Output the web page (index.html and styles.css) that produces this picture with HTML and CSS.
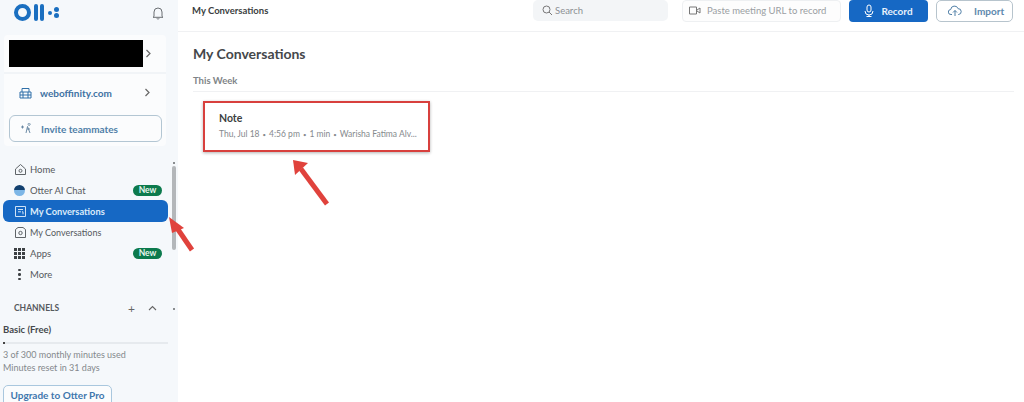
FILE: index.html
```html
<!DOCTYPE html>
<html lang="en">
<head>
<meta charset="utf-8">
<title>My Conversations</title>
<link rel="stylesheet" href="styles.css">
</head>
<body>
<div class="app">
  <aside class="sidebar">
    <div class="brand">
      <div class="logo"><span class="logo-o"></span><span class="logo-l"></span><span class="logo-l"></span><span class="logo-dot"></span><span class="logo-s"><i></i><i></i></span></div>
      <svg class="bell" width="14" height="14" viewBox="0 0 14 14"><path d="M3 10.500V6a4 4 0 0 1 8 0v4.500l1 .8H2zM5.800 12.300a1.300 1.300 0 0 0 2.400 0" fill="none" stroke="#6b6f73" stroke-width="1"/></svg>
    </div>
    <div class="account-card">
      <div class="account-row"><div class="redacted"></div><svg class="chev" width="7" height="9" viewBox="0 0 7 9"><path d="M1.500 1l3.500 3.500L1.500 8" fill="none" stroke="#666" stroke-width="1.200"/></svg></div>
      <div class="org-row">
        <svg width="13" height="13" viewBox="0 0 13 13"><path d="M1 6h11v6H1zM3 6V2.500h7V6M1 9h11M4 6v6M9 6v6" fill="none" stroke="#2f6fa8" stroke-width="1"/></svg>
        <span class="org-name">weboffinity.com</span>
        <svg class="chev-org" width="7" height="9" viewBox="0 0 7 9"><path d="M1.500 1l3.500 3.500L1.500 8" fill="none" stroke="#666" stroke-width="1.200"/></svg>
      </div>
      <button class="invite"><svg width="11" height="11" viewBox="0 0 11 11"><path d="M0 4h3M1.500 2.500v3M7 1.200a1.100 1.100 0 1 1 0 .1M6.500 3.500L5 10M6.500 3.500L9 10M6 6h3" fill="none" stroke="#5d7f9c" stroke-width=".9"/></svg><span>Invite teammates</span></button>
    </div>
    <nav class="nav">
      <div class="nav-item"><svg class="nav-icon" width="13" height="13" viewBox="0 0 13 13"><path d="M1.500 6L6.500 1.500 11.500 6v5.500h-10z" fill="none" stroke="#5f6468" stroke-width="1"/><circle cx="6.500" cy="7.800" r="1.500" fill="none" stroke="#5f6468"/></svg><span>Home</span></div>
      <div class="nav-item"><span class="chat-icon"></span><span>Otter AI Chat</span><span class="badge">New</span></div>
      <div class="nav-item active"><svg class="nav-icon" width="13" height="13" viewBox="0 0 13 13"><path d="M1.500 1.500h10v10h-10zM4 4.500h5M4 6.800h3M8 6.800h1v2.500" fill="none" stroke="#cfe2f6" stroke-width="1"/></svg><span>My Conversations</span></div>
      <div class="nav-item"><svg class="nav-icon" width="13" height="13" viewBox="0 0 13 13"><path d="M1.500 3.500L4 1.500h5l2.500 2v8h-10z" fill="none" stroke="#5f6468" stroke-width="1"/><circle cx="6.500" cy="7" r="1.700" fill="none" stroke="#5f6468"/></svg><span class="tight">My Conversations</span></div>
      <div class="nav-item"><span class="apps-icon"><i></i><i></i><i></i><i></i><i></i><i></i><i></i><i></i><i></i></span><span>Apps</span><span class="badge">New</span></div>
      <div class="nav-item"><span class="more-icon"><i></i><i></i><i></i></span><span>More</span></div>
    </nav>
    <div class="channels">
      <span class="channels-title">CHANNELS</span>
      <span class="channel-plus">+</span>
      <svg width="9" height="6" viewBox="0 0 9 6"><path d="M1 5l3.500-3.500L8 5" fill="none" stroke="#666" stroke-width="1.100"/></svg>
    </div>
    <div class="plan">
      <div class="plan-name">Basic (Free)</div>
      <div class="plan-bar"><div class="plan-fill"></div></div>
      <div class="plan-text">3 of 300 monthly minutes used</div>
      <div class="plan-text">Minutes reset in 31 days</div>
      <button class="upgrade">Upgrade to Otter Pro</button>
    </div>
    <div class="scrollbar"></div>
  </aside>
  <main class="main">
    <header class="topbar">
      <div class="top-title">My Conversations</div>
      <div class="search"><svg width="11" height="11" viewBox="0 0 11 11"><circle cx="4.500" cy="4.500" r="3.500" fill="none" stroke="#777" stroke-width="1"/><path d="M7 7l3 3" stroke="#777" stroke-width="1"/></svg><span>Search</span></div>
      <div class="paste"><svg width="12" height="9" viewBox="0 0 12 9"><path d="M.5 1h7v7h-7zM8 4l3-2v5L8 5" fill="none" stroke="#777" stroke-width="1"/></svg><span>Paste meeting URL to record</span></div>
      <button class="record"><svg width="10" height="13" viewBox="0 0 10 13"><rect x="3" y="1" width="4" height="7" rx="2" fill="none" stroke="#fff"/><path d="M1 7a4 4 0 0 0 8 0M5 11v1.500M2.500 12.500h5" fill="none" stroke="#fff"/></svg><span>Record</span></button>
      <button class="import"><svg width="14" height="12" viewBox="0 0 14 12"><path d="M4 9.500H3a2.500 2.500 0 0 1-.3-5 3.800 3.800 0 0 1 7.400-.8A2.800 2.800 0 0 1 10.500 9.500H10M7 11V5.500M5 7.500l2-2 2 2" fill="none" stroke="#4f7ea6" stroke-width="1"/></svg><span>Import</span></button>
    </header>
    <section class="content">
      <h1>My Conversations</h1>
      <h2>This Week</h2>
      <article class="note">
        <div class="note-title">Note</div>
        <div class="note-meta"><span>Thu, Jul 18</span><span class="sep">•</span><span>4:56 pm</span><span class="sep">•</span><span>1 min</span><span class="sep">•</span><span>Warisha Fatima Alv...</span></div>
      </article>
    </section>
  </main>
  <svg class="arrow arrow-note" width="46" height="56" viewBox="0 0 46 56"><path d="M38 49L12 14" stroke="#e0423c" stroke-width="5" fill="none"/><path d="M4 5l15 3-13 12z" fill="#e0423c"/></svg>
  <svg class="arrow arrow-nav" width="30" height="44" viewBox="0 0 30 44"><path d="M25 35L10 13" stroke="#e0423c" stroke-width="5" fill="none"/><path d="M2 2l15 11-12 5z" fill="#e0423c"/></svg>
</div>
</body>
</html>
```
FILE: styles.css
```css
* { box-sizing: border-box; }
html, body { margin: 0; height: 402px; overflow: hidden; }
body { font-family: Lato, "Noto Sans", sans-serif; background: #fff; color: #3a3d40; }
button { font-family: inherit; cursor: pointer; }

.app { position: relative; display: flex; width: 1024px; height: 402px; overflow: hidden; }

.sidebar { position: relative; width: 178px; flex: none; background: #f5f8fb; padding: 0 10px 0 0; }
.brand { display: flex; align-items: flex-start; justify-content: space-between; height: 35px; padding: 4px 3px 0 14px; }
.logo { display: flex; align-items: center; gap: 2.500px; height: 17px; }
.logo-o { width: 17px; height: 17px; border: 4.500px solid #1b6fc0; border-radius: 50%; }
.logo-l { width: 4px; height: 17px; background: #1b6fc0; border-radius: 2px; }
.logo-dot { width: 4px; height: 4px; border-radius: 50%; background: #1b6fc0; margin: 0 0 0 1px; }
.logo-s { display: flex; flex-direction: column; gap: 1.500px; }
.logo-s i { display: block; width: 5px; height: 5px; border-radius: 50%; background: #1b6fc0; }
.bell { margin-top: 2px; }

.account-card { margin-left: 4px; width: 162px; display: flex; flex-direction: column; background: #fbfcfd; border-radius: 4px; }
.account-row { display: flex; align-items: center; height: 39px; padding-left: 5px; border-bottom: 2px solid #f1f4f7; }
.redacted { width: 134px; height: 27px; background: #000; }
.chev { margin-left: 2px; }
.org-row { display: flex; align-items: center; height: 37px; padding: 0 15px; color: #3f72a3; }
.org-name { margin-left: 8px; flex: 1; font-size: 10px; font-weight: 700; }
.invite { display: flex; align-items: center; gap: 9px; width: 153px; height: 27px; margin: 4px 0 4px 5px; padding: 0 0 0 11px; background: #fbfcfd; border: 1px solid #b3c6d3; border-radius: 6px; color: #4f7fa8; font-size: 10px; font-weight: 700; }

.nav { display: flex; flex-direction: column; margin-top: 13px; margin-left: 3px; width: 165px; }
.nav-item { display: flex; align-items: center; height: 21px; padding: 0 6px 0 11px; font-size: 9.500px; color: #55595d; }
.nav-icon { margin-right: 3px; flex: none; }
.tight { font-size: 9px; }
.nav-item.active { height: 22px; margin-top: -1px; background: #1668c4; color: #dcebfa; border-radius: 6px; font-weight: 700; font-size: 9.300px; }
.chat-icon { width: 11px; height: 11px; margin-right: 5px; border-radius: 50%; background: linear-gradient(#12406f 50%, #7db6e6 50%); flex: none; }
.badge { margin-left: auto; height: 11px; line-height: 11px; background: #0c7a4d; color: #e8f5ee; border-radius: 6px; font-size: 8.500px; font-weight: 700; width: 29px; text-align: center; }
.apps-icon { display: grid; grid-template-columns: repeat(3, 2.500px); gap: 1.500px; width: 11px; margin-right: 5px; flex: none; }
.apps-icon i { width: 2.500px; height: 2.500px; background: #3d4144; }
.more-icon { display: flex; flex-direction: column; gap: 2px; align-items: center; width: 11px; margin-right: 5px; flex: none; }
.more-icon i { width: 2.500px; height: 2.500px; border-radius: 50%; background: #3d4144; }

.channels { display: flex; align-items: center; margin-top: 16px; padding-left: 14px; padding-right: 11px; height: 14px; font-size: 8.500px; font-weight: 700; color: #55595d; }
.channels-title { flex: 1; }
.channel-plus { font-size: 12px; font-weight: 400; margin-right: 13px; color: #666; }

.plan { padding-left: 3px; margin-top: 8px; }
.plan-name { font-size: 9.500px; font-weight: 700; color: #45494d; line-height: 13px; }
.plan-bar { width: 165px; height: 1.500px; margin: 6px 0 4px; background: #e6eaee; }
.plan-fill { width: 2px; height: 2px; background: #444; }
.plan-text { font-size: 9px; line-height: 13.500px; color: #84888c; }
.upgrade { display: block; margin-top: 10px; width: 109px; height: 26px; padding: 0 0 5px; background: #fbfcfd; border: 1px solid #a9c7de; border-radius: 5px; color: #3f77ad; font-size: 10px; font-weight: 700; }

.scrollbar { position: absolute; left: 172px; top: 166px; width: 4px; height: 84px; background: #b4b7ba; border-radius: 2px; }
.scrollbar::before { content: ""; position: absolute; left: 1px; top: -4px; width: 2px; height: 2px; background: #8a8d90; }
.scrollbar::after { content: ""; position: absolute; left: 1px; top: 142px; width: 2px; height: 2px; background: #8a8d90; }

.main { flex: 1; display: flex; flex-direction: column; min-width: 0; }
.topbar { display: flex; align-items: center; height: 32px; padding: 0 11px 10px 14px; border-bottom: 1px solid #f0f1f3; flex: none; }
.top-title { flex: 1; font-size: 9.500px; font-weight: 700; color: #3b3e41; }
.search { display: flex; align-items: center; gap: 2px; width: 135px; height: 21px; margin-right: 14px; padding-left: 9px; background: #f3f5f7; border-radius: 5px; font-size: 9.500px; color: #8c9094; }
.paste { display: flex; align-items: center; gap: 6px; width: 159px; height: 22px; margin-right: 8px; padding-left: 6px; background: #fdfdfd; border: 1px solid #eef0f2; border-radius: 4px; font-size: 9.500px; color: #9a9ea2; }
.record { display: flex; align-items: center; justify-content: center; gap: 7px; width: 79px; height: 22px; margin-right: 8px; padding: 0; background: #1668c4; color: #e8f1fb; border: 0; border-radius: 4px; font-size: 10px; font-weight: 700; }
.import { display: flex; align-items: center; gap: 12px; width: 77px; height: 22px; padding: 0 0 0 11px; background: #fff; border: 1px solid #b7c4cd; border-radius: 5px; color: #5d88ad; font-size: 10px; font-weight: 700; }

.content { padding: 13px 0 0 15px; }
h1 { margin: 0; font-size: 14px; line-height: 17px; font-weight: 700; color: #44474a; }
h2 { margin: 13px 0 0; padding-bottom: 4px; font-size: 9.500px; line-height: 12px; font-weight: 700; color: #808487; border-bottom: 1px solid #f0f1f3; width: 821px; }
.note { width: 227px; height: 51px; margin: 9px 0 0 10px; padding: 9px 0 0 14px; border: 2px solid #d8403d; box-shadow: 0 1px 3px rgba(0,0,0,.3); }
.note-title { font-size: 10.500px; line-height: 13px; font-weight: 700; color: #3c3f42; }
.note-meta { display: flex; gap: 3px; margin-top: 4px; font-size: 8.500px; line-height: 11px; color: #85898d; white-space: nowrap; }
.sep { font-size: 6px; }

.arrow { position: absolute; }
.arrow-note { left: 289px; top: 155px; }
.arrow-nav { left: 167px; top: 215px; }
```
